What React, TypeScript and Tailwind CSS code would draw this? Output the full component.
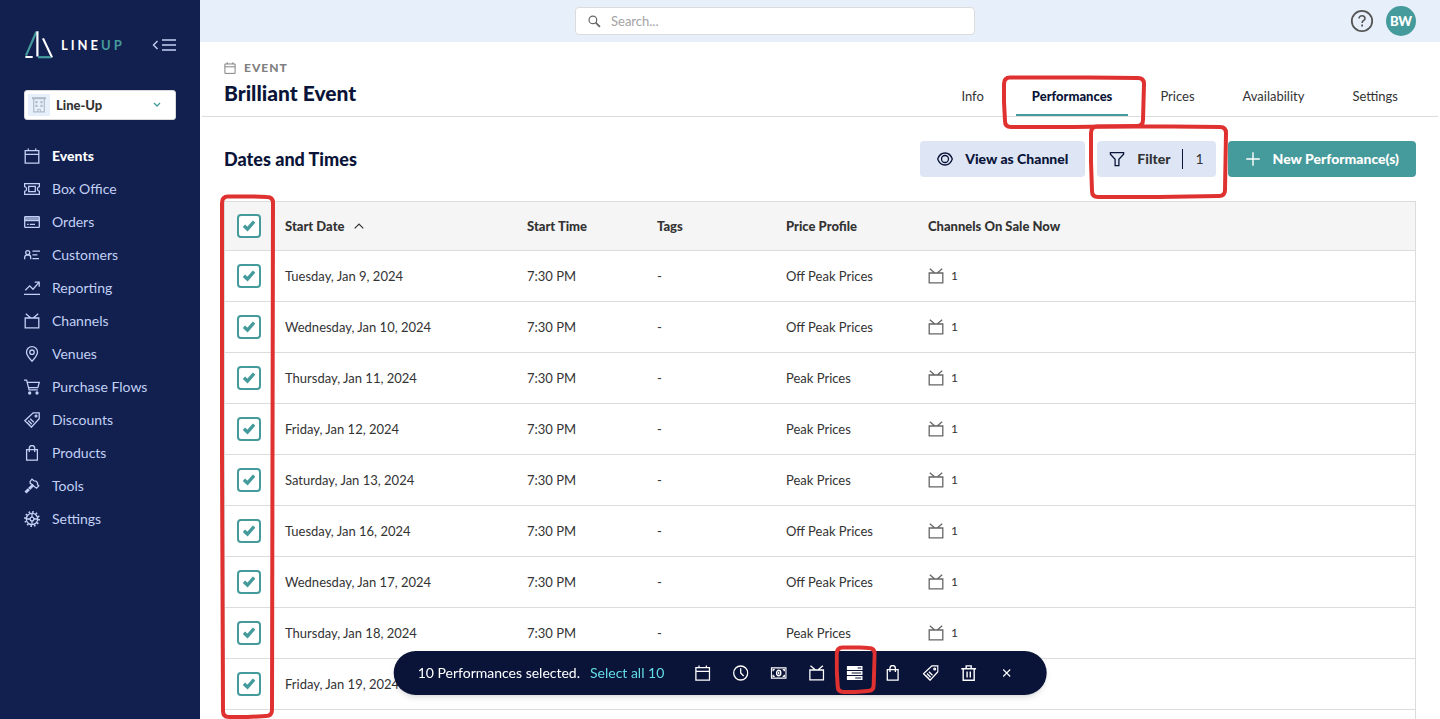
import type { ReactNode } from "react";

type IconProps = { size?: number; className?: string };

function Svg({ size = 16, className = "", children }: IconProps & { children: ReactNode }) {
  return (
    <svg
      width={size}
      height={size}
      viewBox="0 0 16 16"
      fill="none"
      stroke="currentColor"
      strokeWidth="1.3"
      className={`shrink-0 ${className}`}
      aria-hidden="true"
    >
      {children}
    </svg>
  );
}

const CalendarIcon = (p: IconProps) => (
  <Svg {...p}>
    <path d="M1.2 2.600h13.6v12.600H1.2zM1.2 6.400h13.6M4.300.4V3M11.700.4V3" />
  </Svg>
);

const TicketIcon = (p: IconProps) => (
  <Svg {...p}>
    <path d="M.6 2.700h14.800v3c-1.300.2-2 1.100-2 2.300s.7 2.100 2 2.300v3H.6v-3c1.300-.2 2-1.100 2-2.300s-.7-2.100-2-2.300zM4.700 5.400h6.600v5.200H4.700z" />
  </Svg>
);

const CardIcon = (p: IconProps) => (
  <Svg {...p}>
    <rect x=".7" y="2.600" width="14.600" height="10.800" rx=".6" />
    <path d="M.7 6.700h14.600M3 10.300h1.600M5.800 10.300h5.200" />
    <path d="M.7 4.700h14.600" strokeOpacity=".7" strokeWidth="3" />
  </Svg>
);

const CustomersIcon = (p: IconProps) => (
  <Svg {...p}>
    <circle cx="3.700" cy="5.700" r="2" />
    <path d="M.7 12.200V10.400c0-1.300.9-2.400 2-2.400h2c1.100 0 2 1.100 2 2.400v1.800M8.400 4.200H16M8.400 7.900H13.400M8.400 11.600H15" />
  </Svg>
);

const ReportIcon = (p: IconProps) => (
  <Svg {...p}>
    <path d="M1.300 10.300 5.700 5.900l3.300 3.300 5.800-6.600M10.700 2.200h4.500v4.500M0 14.400h16" />
  </Svg>
);

const ChannelIcon = (p: IconProps) => (
  <Svg {...p}>
    <path d="M1.200 5h13.600v9.800H1.200zM1.800.8l4.700 4M14.200.8l-4.700 4" />
  </Svg>
);

const PinIcon = (p: IconProps) => (
  <Svg {...p}>
    <path d="M8 15.200C5 12 2.500 9.400 2.500 6.200a5.500 5.500 0 0 1 11 0C13.500 9.400 11 12 8 15.200z" />
    <circle cx="8" cy="6.200" r="2.200" />
  </Svg>
);

const CartIcon = (p: IconProps) => (
  <Svg {...p}>
    <path d="M0 1.200h2.600l2.500 9.600h8.700M3.200 3.300h12.100l-1.500 5.300H4.500" />
    <circle cx="5.700" cy="14" r="1" fill="currentColor" />
    <circle cx="13" cy="14" r="1" fill="currentColor" />
  </Svg>
);

const TagIcon = (p: IconProps) => (
  <Svg {...p}>
    <path d="M9.200.8h6v6L7.400 15.200.8 8.700zM4.300 8.500l3.600 3.700M6.200 6.700l3.600 3.600M2.700 10.300l3.500 3.500" />
    <circle cx="12" cy="4" r=".9" />
  </Svg>
);

const BagIcon = (p: IconProps) => (
  <Svg {...p}>
    <path d="M2.600 4.700h10.800v10.500H2.600zM5.300 7V3.300a2.700 2.700 0 0 1 5.400 0V7" />
  </Svg>
);

const ToolsIcon = (p: IconProps) => (
  <Svg {...p}>
    <path d="M6.200 3.300 8 1.200l2.100 1.700 1.800.2 1.700 1.800-.2 1.700 1.400 1.300-2.200 2.300-2.300-1.600-1.700-1.800-2.400-1.400z" />
    <path d="m9.100 7-7.600 7.600" strokeWidth="2.800" />
    <path d="m4.300 10.300 1.600 1.600" stroke="#11204f" strokeWidth=".8" />
  </Svg>
);

const GearIcon = (p: IconProps) => (
  <Svg {...p}>
    <circle cx="8" cy="8" r="5.700" />
    <circle cx="8" cy="8" r="7" strokeWidth="1.800" strokeDasharray="1.600 2.065" />
    <circle cx="8" cy="8" r="1.900" />
    <path d="M8 2.300V6M8 10v3.700M2.300 8H6M10 8h3.700" />
  </Svg>
);

const SearchIcon = (p: IconProps) => (
  <Svg {...p}>
    <circle cx="6" cy="6" r="4.700" strokeWidth="1.500" />
    <path d="m9.500 9.500 5.200 5.200" strokeWidth="2.200" />
  </Svg>
);

const EyeIcon = (p: IconProps) => (
  <Svg {...p}>
    <path d="M.7 8C2 4.200 4.700 2 8 2s6 2.200 7.300 6c-1.300 3.800-4 6-7.300 6S2 11.800.7 8z" />
    <circle cx="8" cy="8" r="3.500" />
  </Svg>
);

const FunnelIcon = (p: IconProps) => (
  <Svg {...p}>
    <path d="M1.400 1.700h13.200v1.500L9.900 8.300v6.300H6.100V8.300L1.400 3.200z" strokeWidth="1.300" />
  </Svg>
);

const PlusIcon = (p: IconProps) => (
  <Svg {...p}>
    <path d="M8 1.200v13.600M1.200 8h13.600" strokeWidth="1.400" />
  </Svg>
);

const ClockIcon = (p: IconProps) => (
  <Svg {...p}>
    <circle cx="8" cy="8" r="7" />
    <path d="M8 3.300V8l3 3" />
  </Svg>
);

const CashIcon = (p: IconProps) => (
  <Svg {...p}>
    <path d="M.6 2.800h14.800v10.400H.6z" strokeWidth="1.300" />
    <ellipse cx="8" cy="8" rx="2.100" ry="2.700" strokeWidth="1.400" />
    <path d="M8 6.800v2.400M2.400 6.200V4.600H4M2.400 9.800v1.600H4M13.600 6.200V4.600H12M13.600 9.800v1.600H12" />
  </Svg>
);

const ListIcon = (p: IconProps) => (
  <Svg {...p}>
    <path d="M0 1h16v4H0zM0 6h16v4H0zM0 11h16v4H0z" fill="currentColor" stroke="none" />
    <path d="M11 3h3.500M5 8h9.500M8.500 13h6" stroke="#0a1438" strokeWidth="1.100" />
  </Svg>
);

const TrashIcon = (p: IconProps) => (
  <Svg {...p}>
    <path d="M.6 3.700h14.800M2.500 3.700v11.500h11V3.700M5.500 3.600V.9h5v2.700M6.400 6.400v6.200M9.600 6.400v6.200" strokeWidth="1.400" />
  </Svg>
);

const CloseIcon = (p: IconProps) => (
  <Svg {...p}>
    <path d="m4.500 4.500 7 7M11.500 4.500l-7 7" strokeWidth="1.100" />
  </Svg>
);

const BuildingIcon = () => (
  <svg width="14" height="16" viewBox="0 0 14 16" className="text-[#b0bccb]" fill="none" stroke="currentColor" aria-hidden="true">
    <path d="M0 1.200h14" strokeWidth="2.200" />
    <path d="M1.700 2v12.800h10.600V2" strokeWidth="1.200" />
    <path d="M4.500 4v7M9.500 4v7" strokeWidth="2.200" strokeDasharray="2.200 1.600" />
    <path d="M5.600 15v-2.600h2.800V15" />
  </svg>
);

function Logo() {
  return (
    <svg width="30" height="30" viewBox="0 0 30 30" fill="none" strokeWidth="2.200" aria-hidden="true">
      <path d="M12.400 1.800 2 25.600" stroke="#459a9c" />
      <path d="M1.400 27h7.300M13.400 1.200v25.400M19 8.400l9 19" stroke="#fff" />
      <path d="M14 27.200h13" stroke="#459a9c" />
    </svg>
  );
}

/* Hand-drawn highlight around an element. */
function Marker({ w, h, className }: { w: number; h: number; className: string }) {
  return (
    <svg
      width={w}
      height={h}
      viewBox={`0 0 ${w} ${h}`}
      fill="none"
      stroke="#e03131"
      strokeWidth="4"
      strokeLinejoin="round"
      className={`pointer-events-none absolute max-w-none ${className}`}
      aria-hidden="true"
    >
      <path
        d={`M8 2.500H${w * 0.6}L${w - 8} 3Q${w - 2} 3 ${w - 2} 9L${w - 3} ${h - 9}Q${w - 3} ${h - 3} ${w - 9} ${h - 3}L${w * 0.5} ${h - 2}H9Q3 ${h - 2} 3 ${h - 8}L2 ${h * 0.5}V9Q2 2.500 8 2.500`}
      />
    </svg>
  );
}

function Check({ label }: { label: string }) {
  return (
    <label className="grid size-6 place-items-center">
      <input
        type="checkbox"
        defaultChecked
        aria-label={label}
        className="peer col-start-1 row-start-1 size-6 appearance-none rounded-[4px] border-2 border-[#459a9c] bg-white"
      />
      <svg
        width="12"
        height="12"
        viewBox="0 0 12 12"
        fill="none"
        stroke="#459a9c"
        strokeWidth="3.400"
        className="pointer-events-none invisible col-start-1 row-start-1 peer-checked:visible"
        aria-hidden="true"
      >
        <path d="M.9 5.700 4.500 9 11.100 1.500" />
      </svg>
    </label>
  );
}

const nav = [
  { label: "Events", Icon: CalendarIcon, active: true },
  { label: "Box Office", Icon: TicketIcon },
  { label: "Orders", Icon: CardIcon },
  { label: "Customers", Icon: CustomersIcon },
  { label: "Reporting", Icon: ReportIcon },
  { label: "Channels", Icon: ChannelIcon },
  { label: "Venues", Icon: PinIcon },
  { label: "Purchase Flows", Icon: CartIcon },
  { label: "Discounts", Icon: TagIcon },
  { label: "Products", Icon: BagIcon },
  { label: "Tools", Icon: ToolsIcon },
  { label: "Settings", Icon: GearIcon },
];

const tabs = ["Info", "Performances", "Prices", "Availability", "Settings"];

const rows = [
  ["Tuesday, Jan 9, 2024", "Off Peak Prices"],
  ["Wednesday, Jan 10, 2024", "Off Peak Prices"],
  ["Thursday, Jan 11, 2024", "Peak Prices"],
  ["Friday, Jan 12, 2024", "Peak Prices"],
  ["Saturday, Jan 13, 2024", "Peak Prices"],
  ["Tuesday, Jan 16, 2024", "Off Peak Prices"],
  ["Wednesday, Jan 17, 2024", "Off Peak Prices"],
  ["Thursday, Jan 18, 2024", "Peak Prices"],
  ["Friday, Jan 19, 2024", "Peak Prices"],
];

const columns = ["Start Time", "Tags", "Price Profile", "Channels On Sale Now"];

const actions = [
  { label: "Change date", Icon: CalendarIcon },
  { label: "Change time", Icon: ClockIcon },
  { label: "Change prices", Icon: CashIcon },
  { label: "Change channels", Icon: ChannelIcon },
  { label: "Edit details", Icon: ListIcon, marked: true },
  { label: "Products", Icon: BagIcon },
  { label: "Tags", Icon: TagIcon },
  { label: "Delete", Icon: TrashIcon },
  { label: "Clear selection", Icon: CloseIcon },
];

function Sidebar() {
  return (
    <aside className="flex w-[200px] shrink-0 flex-col bg-[#11204f] px-6 pt-[30px]">
      <div className="flex items-center">
        <Logo />
        <span className="ml-[7px] text-[13px] leading-[30px] font-bold tracking-[3px] text-white">
          LINE<span className="text-[#459a9c]">UP</span>
        </span>
        <button type="button" aria-label="Collapse menu" className="ml-auto text-[#c3d0f5]">
          <svg width="24" height="14" viewBox="0 0 24 14" fill="none" stroke="currentColor" strokeWidth="1.400" aria-hidden="true">
            <path d="M5.500 3 1.500 7l4 4M10 2h14M10 7h14M10 12h14" />
          </svg>
        </button>
      </div>

      <div className="mt-[30px] flex h-[30px] items-center rounded-[3px] border border-[#d9d9d9] bg-white pl-[3px]">
        <span className="grid size-[22px] shrink-0 place-items-center bg-[#e7f0fa]">
          <BuildingIcon />
        </span>
        <div className="grid flex-1 items-center">
          <select
            aria-label="Organisation"
            className="col-start-1 row-start-1 w-full appearance-none bg-transparent pl-1.5 text-[13px] leading-5 font-black text-[#333]"
          >
            <option>Line-Up</option>
          </select>
          <svg
            width="8"
            height="6"
            viewBox="0 0 8 6"
            fill="none"
            stroke="#459a9c"
            strokeWidth="1.300"
            className="pointer-events-none col-start-1 row-start-1 mr-3.5 justify-self-end"
            aria-hidden="true"
          >
            <path d="m1 1 3 3 3-3" />
          </svg>
        </div>
      </div>

      <nav className="mt-[19px] flex flex-col">
        {nav.map(({ label, Icon, active }) => (
          <a
            key={label}
            href="#"
            className={`flex h-[33px] items-center gap-3 text-[14px] leading-5 ${
              active ? "font-black text-white" : "text-[#c3d0f5]"
            }`}
          >
            <Icon className="text-[#c3d0f5]" />
            {label}
          </a>
        ))}
      </nav>
    </aside>
  );
}

function TopBar() {
  return (
    <div className="flex h-[42px] shrink-0 items-center bg-[#e7f0fa] pr-6">
      <div className="flex flex-1 justify-center">
        <label className="flex h-7 w-[400px] items-center gap-2.5 rounded-[4px] border border-[#dcdcdc] bg-white px-3 text-[#666]">
          <SearchIcon size={13} />
          <input
            type="text"
            aria-label="Search"
            placeholder="Search..."
            className="w-full bg-transparent text-[13px] leading-5 outline-none placeholder:text-[#a3a3a3]"
          />
        </label>
      </div>
      <div className="flex items-center gap-3">
        <button type="button" aria-label="Help" className="text-[#555]">
          <svg width="24" height="24" viewBox="0 0 24 24" fill="none" stroke="currentColor" strokeWidth="1.800" className="block" aria-hidden="true">
            <circle cx="12" cy="12" r="10.200" />
            <path d="M9 9.600c0-1.800 1.300-2.900 3-2.900s3 1.100 3 2.700c0 2.100-2.900 2.100-2.900 4.500" strokeWidth="1.600" />
            <path d="M12.100 15.600v1.800" />
          </svg>
        </button>
        <button type="button" className="size-[30px] rounded-full bg-[#459a9c] text-[13px] leading-5 font-black text-white">
          BW
        </button>
      </div>
    </div>
  );
}

function EventHeader() {
  return (
    <header className="mx-0.5 flex h-[75px] shrink-0 items-end justify-between border-b border-[#dcdcdc] pl-[22px]">
      <div className="flex flex-col pb-[9px]">
        <div className="flex items-center gap-2 text-[12px] leading-4 font-black tracking-[1px] text-[#808080]">
          <CalendarIcon size={12} />
          EVENT
        </div>
        <h1 className="mt-[3px] text-[21px] leading-7 font-black text-[#0a1438]">Brilliant Event</h1>
      </div>
      <nav className="flex gap-4 pr-6">
        {tabs.map((tab) => (
          <a
            key={tab}
            href="#"
            className={`relative flex h-[38px] items-center border-b-2 px-4 text-[13px] leading-5 ${
              tab === "Performances" ? "border-[#459a9c] font-black text-[#0a1438]" : "border-transparent text-[#333]"
            }`}
          >
            {tab}
            {tab === "Performances" && <Marker w={144} h={54} className="-top-[3px] -left-[14px] z-10" />}
          </a>
        ))}
      </nav>
    </header>
  );
}

function PerformanceTable() {
  return (
    <div className="relative mt-6 flex-1 border-x border-t border-[#dcdcdc]">
      <table className="w-full table-fixed border-collapse text-left text-[13px] leading-5 text-[#333]">
        <colgroup>
          <col className="w-[48px]" />
          <col className="w-[242px]" />
          <col className="w-[130px]" />
          <col className="w-[129px]" />
          <col className="w-[142px]" />
          <col />
        </colgroup>
        <thead>
          <tr className="h-12 border-b border-[#dcdcdc] bg-[#f5f5f5]">
            <th className="pl-3">
              <Check label="Select all performances" />
            </th>
            <th className="pl-3 font-black">
              <button type="button" className="flex items-center gap-2.5">
                Start Date
                <svg width="10" height="6" viewBox="0 0 10 6" fill="none" stroke="currentColor" strokeWidth="1.200" aria-hidden="true">
                  <path d="m.7 5.300 4.300-4.300 4.300 4.300" />
                </svg>
              </button>
            </th>
            {columns.map((column) => (
              <th key={column} className="pl-3 font-black">
                {column}
              </th>
            ))}
          </tr>
        </thead>
        <tbody>
          {rows.map(([date, profile]) => (
            <tr key={date} className="h-[51px] border-b border-[#dcdcdc]">
              <td className="pl-3">
                <Check label={`Select ${date}`} />
              </td>
              <td className="pl-3">{date}</td>
              <td className="pl-3">7:30 PM</td>
              <td className="pl-3">-</td>
              <td className="pl-3">{profile}</td>
              <td className="pl-3">
                <span className="flex items-center gap-[7px] text-[12px]">
                  <ChannelIcon className="text-[#666]" />1
                </span>
              </td>
            </tr>
          ))}
        </tbody>
      </table>
      <Marker w={55} h={525} className="-top-[8px] -left-[5px] z-10" />
    </div>
  );
}

function SelectionBar() {
  return (
    <div className="fixed bottom-6 left-1/2 z-20 flex h-11 -translate-x-1/2 items-center rounded-full bg-[#0a1438] pr-[21px] pl-6 text-[14px] leading-5 whitespace-nowrap text-white shadow-md">
      <span>10 Performances selected.</span>
      <button type="button" className="mr-[19px] ml-2.5 text-[#63dce6]">
        Select all 10
      </button>
      {actions.map(({ label, Icon, marked }) => (
        <button key={label} type="button" aria-label={label} className="relative grid h-11 w-[38px] place-items-center">
          <Icon />
          {marked && <Marker w={42} h={49} className="-top-[6px] -left-[1px]" />}
        </button>
      ))}
    </div>
  );
}

export default function App() {
  return (
    <div className="flex h-screen overflow-hidden bg-white font-['Lato',sans-serif]">
      <Sidebar />
      <main className="flex min-w-0 flex-1 flex-col overflow-hidden">
        <TopBar />
        <EventHeader />
        <section className="flex flex-1 flex-col px-6 pt-6">
          <div className="flex items-center justify-between">
            <h2 className="text-[18px] leading-6 font-black text-[#0a1438]">Dates and Times</h2>
            <div className="flex gap-3 text-[14px] leading-5 font-black">
              <button type="button" className="flex h-9 items-center gap-3 rounded-[4px] bg-[#dee6f6] px-[17px] text-[#0a1438]">
                <EyeIcon />
                View as Channel
              </button>
              <button type="button" className="relative flex h-9 items-center gap-3 rounded-[4px] bg-[#dee6f6] px-3 text-[#333]">
                <FunnelIcon className="text-[#0a1438]" />
                Filter
                <span className="h-5 w-px bg-[#0a1438]" />
                <span className="font-normal">1</span>
                <Marker w={139} h={75} className="-top-[17px] -left-[8px] z-10" />
              </button>
              <button type="button" className="flex h-9 items-center gap-3 rounded-[4px] bg-[#459a9c] px-[17px] text-white">
                <PlusIcon />
                New Performance(s)
              </button>
            </div>
          </div>
          <PerformanceTable />
        </section>
      </main>
      <SelectionBar />
    </div>
  );
}
